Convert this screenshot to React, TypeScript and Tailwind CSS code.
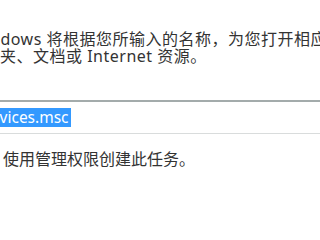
const App = () => {
  return (
    <div
      className="w-[320px] h-[200px] overflow-hidden bg-white text-[#333333] text-[16px]"
      style={{ fontFamily: '"Noto Sans", "Noto Sans CJK SC", sans-serif' }}
    >
      {/* Description (dialog is cropped on the left) */}
      <div className="pt-[31px] leading-[17px] tracking-[0.5px] whitespace-nowrap">
        <div className="ml-[-30px]">Windows 将根据您所输入的名称，为您打开相应的程序、文件</div>
        <div className="ml-[-33px]">文件夹、文档或 Internet 资源。</div>
      </div>

      {/* Open input with selected text */}
      <div className="mt-[35px] h-[34px] border-t-2 border-b border-t-[#a3abab] border-b-[#d9dcdc] bg-white pt-[3px] whitespace-nowrap">
        <span className="inline-block ml-[-23px] pr-[2px] h-[19px] leading-[19px] text-[15.5px] bg-[#3399ff] text-white">
          services.msc
        </span>
      </div>

      {/* Admin note */}
      <div className="mt-[17px] ml-[3px] leading-[17px] whitespace-nowrap">使用管理权限创建此任务。</div>
    </div>
  );
};

export default App;
